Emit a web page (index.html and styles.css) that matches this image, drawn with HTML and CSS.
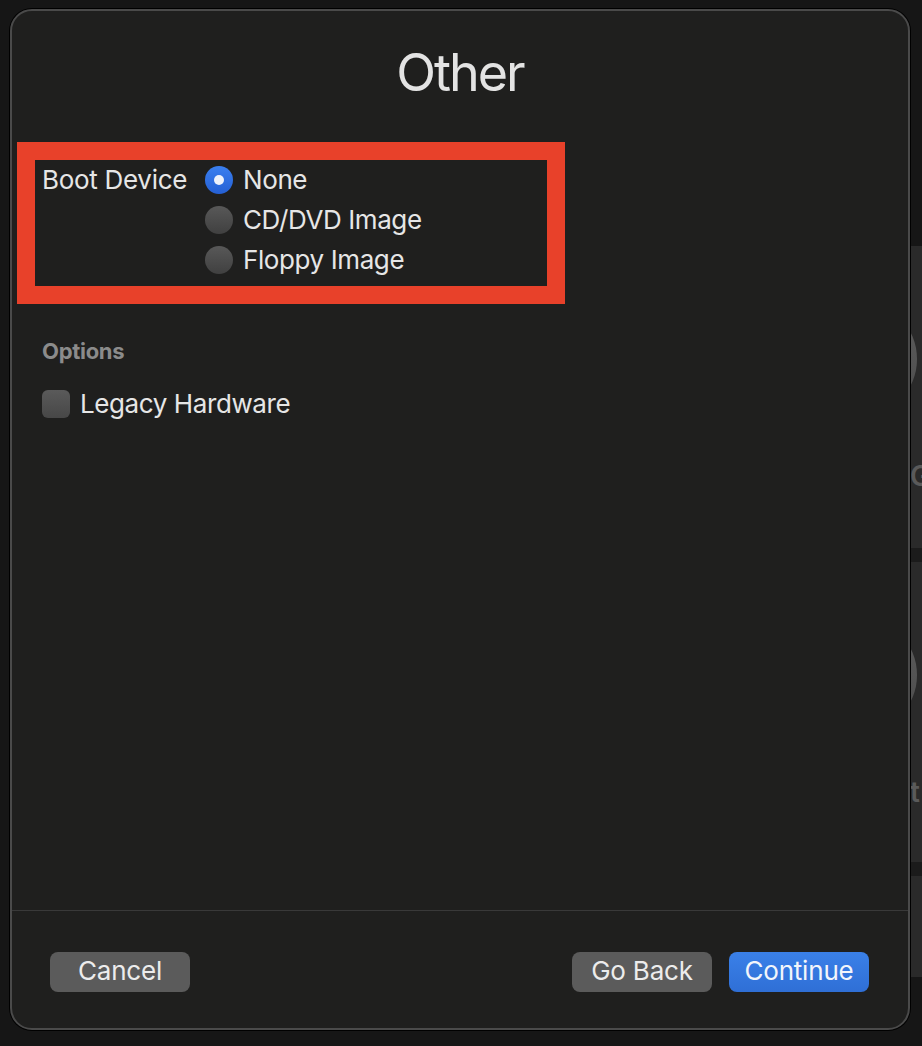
FILE: index.html
```html
<!DOCTYPE html>
<html lang="en">
<head>
<meta charset="utf-8">
<title>Other</title>
<link rel="stylesheet" href="styles.css">
</head>
<body>
<div class="backdrop-window">
  <div class="bw-section bw-first">
    <div class="bw-icon"></div>
    <div class="bw-label">G</div>
  </div>
  <div class="bw-band"></div>
  <div class="bw-section">
    <div class="bw-icon"></div>
    <div class="bw-label">t</div>
  </div>
  <div class="bw-band"></div>
  <div class="bw-section bw-last"></div>
</div>

<div class="stage">
  <div class="sheet">
    <div class="sheet-body">
      <h1 class="title">Other</h1>

      <div class="highlight">
        <div class="field">
          <div class="field-label">Boot Device</div>
          <div class="radio-group">
            <div class="radio-row"><span class="radio radio-on"></span><span class="radio-text">None</span></div>
            <div class="radio-row"><span class="radio"></span><span class="radio-text">CD/DVD Image</span></div>
            <div class="radio-row"><span class="radio"></span><span class="radio-text">Floppy Image</span></div>
          </div>
        </div>
      </div>

      <div class="section-title">Options</div>
      <div class="check-row"><span class="checkbox"></span><span class="check-text">Legacy Hardware</span></div>
    </div>

    <div class="sheet-footer">
      <button class="btn">Cancel</button>
      <div class="btn-group">
        <button class="btn">Go Back</button>
        <button class="btn btn-primary">Continue</button>
      </div>
    </div>
  </div>
</div>
</body>
</html>
```

FILE: styles.css
```css
html, body {
  margin: 0;
  padding: 0;
}

body {
  width: 922px;
  height: 1046px;
  overflow: hidden;
  position: relative;
  background: #161616;
  font-family: "Inter", "Noto Sans", sans-serif;
  color: #e6e6e6;
}

/* window lying behind the sheet */
.backdrop-window {
  position: absolute;
  left: 700px;
  top: 246px;
  width: 222px;
  height: 731px;
  overflow: hidden;
  background: #2a2a2a;
  display: flex;
  flex-direction: column;
}

.bw-section {
  position: relative;
  height: 302px;
  display: flex;
  flex-direction: column;
}

.bw-section + .bw-band + .bw-section {
  height: 300px;
}

.bw-last {
  flex: 1;
}

.bw-band {
  height: 14px;
  background: #1b1b1b;
}

.bw-icon {
  width: 118px;
  height: 118px;
  border-radius: 50%;
  background: linear-gradient(#5e5e5e, #4a4a4a);
  margin: 54px 0 0 99px;
}

.bw-label {
  margin: 43px 0 0 210px;
  font-size: 28px;
  font-weight: 600;
  color: #5a5a5a;
  line-height: 30px;
}

.stage {
  position: relative;
  z-index: 1;
  padding: 9px 0 0 10px;
}

.sheet {
  width: 900px;
  height: 1021px;
  box-sizing: border-box;
  border: 2px solid #4a4a4a;
  border-radius: 22px;
  background: #1f1f1e;
  box-shadow: 0 0 0 1px #000;
  display: flex;
  flex-direction: column;
}

.sheet-body {
  flex: 1;
}

.title {
  margin: 32px 0 0;
  font-size: 52px;
  line-height: 60px;
  font-weight: 400;
  letter-spacing: -2px;
  text-align: center;
  color: #e3e3e3;
}

.highlight {
  margin: 39px 0 0 5px;
  width: 548px;
  height: 162px;
  box-sizing: border-box;
  border: 18px solid #e8412a;
  padding: 0 0 0 7px;
}

.field {
  display: flex;
}

.field-label {
  width: 163px;
  font-size: 26px;
  line-height: 40px;
  letter-spacing: -0.3px;
  color: #e6e6e6;
}

.radio-group {
  display: flex;
  flex-direction: column;
}

.radio-row {
  height: 40px;
  display: flex;
  align-items: center;
  gap: 10px;
}

.radio {
  width: 28px;
  height: 28px;
  border-radius: 50%;
  box-sizing: border-box;
  background: linear-gradient(#585858, #404040);
  display: flex;
  align-items: center;
  justify-content: center;
}

.radio-on {
  background: linear-gradient(#3a7ff0, #2560d4);
}

.radio-on::after {
  content: "";
  width: 10px;
  height: 10px;
  border-radius: 50%;
  background: #eef2fb;
}

.radio-text,
.check-text {
  font-size: 26px;
  line-height: 40px;
  letter-spacing: -0.4px;
  color: #e6e6e6;
}

.section-title {
  margin: 32px 0 0 30px;
  font-size: 22px;
  line-height: 30px;
  font-weight: 700;
  letter-spacing: -0.3px;
  color: #8b8b8b;
}

.check-row {
  margin: 18px 0 0 30px;
  height: 40px;
  display: flex;
  align-items: center;
  gap: 10px;
}

.checkbox {
  width: 28px;
  height: 28px;
  border-radius: 6px;
  background: linear-gradient(#5a5a5a, #474747);
}

.sheet-footer {
  border-top: 1px solid #393939;
  height: 118px;
  padding: 41px 39px 0 38px;
  box-sizing: border-box;
  display: flex;
  justify-content: space-between;
  align-items: flex-start;
}

.btn-group {
  display: flex;
  gap: 17px;
}

.btn {
  width: 140px;
  height: 40px;
  border: none;
  border-radius: 8px;
  background: #5b5b5b;
  color: #ececec;
  font-family: "Inter", "Noto Sans", sans-serif;
  font-size: 26px;
  line-height: 36px;
  letter-spacing: -0.2px;
  padding: 0 0 2px;
  text-align: center;
}

.btn-primary {
  background: linear-gradient(#3a80e8, #2f6fd6);
  color: #f2f5fb;
}
```
